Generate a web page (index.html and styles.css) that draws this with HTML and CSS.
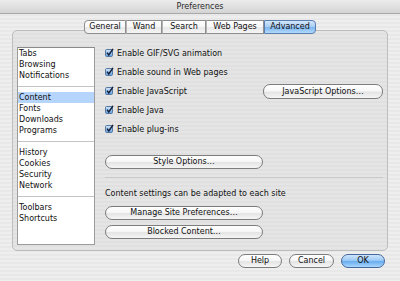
FILE: index.html
```html
<!DOCTYPE html>
<html>
<head>
<meta charset="utf-8">
<title>Preferences</title>
<link rel="stylesheet" href="styles.css">
</head>
<body>
<div class="window">
  <div class="titlebar">Preferences</div>
  <div class="tabs">
    <div class="tab t-general">General</div>
    <div class="tab t-wand">Wand</div>
    <div class="tab t-search">Search</div>
    <div class="tab t-web">Web Pages</div>
    <div class="tab t-adv active">Advanced</div>
  </div>
  <div class="group">
    <ul class="list">
      <li>Tabs</li>
      <li>Browsing</li>
      <li>Notifications</li>
      <li class="sep"></li>
      <li class="sel">Content</li>
      <li>Fonts</li>
      <li>Downloads</li>
      <li>Programs</li>
      <li class="sep"></li>
      <li>History</li>
      <li>Cookies</li>
      <li>Security</li>
      <li>Network</li>
      <li class="sep"></li>
      <li>Toolbars</li>
      <li>Shortcuts</li>
    </ul>
    <div class="content">
      <div class="rows">
        <div class="row"><span class="cb"><svg width="9" height="9" viewBox="0 0 9 9"><defs><linearGradient id="g1" x1="0" y1="0" x2="0" y2="1"><stop offset="0" stop-color="#d8e8fb"/><stop offset="1" stop-color="#5f9fe3"/></linearGradient></defs><rect x="0.5" y="1.5" width="7" height="7" rx="1.2" fill="url(#g1)" stroke="#56789f"/><path d="M2 4.6 L3.8 7 L8 0.8" fill="none" stroke="#14213a" stroke-width="1.5"/></svg></span>Enable GIF/SVG animation</div>
        <div class="row"><span class="cb"><svg width="9" height="9" viewBox="0 0 9 9"><rect x="0.5" y="1.5" width="7" height="7" rx="1.2" fill="url(#g1)" stroke="#56789f"/><path d="M2 4.6 L3.8 7 L8 0.8" fill="none" stroke="#14213a" stroke-width="1.5"/></svg></span>Enable sound in Web pages</div>
        <div class="row"><span class="cb"><svg width="9" height="9" viewBox="0 0 9 9"><rect x="0.5" y="1.5" width="7" height="7" rx="1.2" fill="url(#g1)" stroke="#56789f"/><path d="M2 4.6 L3.8 7 L8 0.8" fill="none" stroke="#14213a" stroke-width="1.5"/></svg></span>Enable JavaScript<button class="btn js">JavaScript Options…</button></div>
        <div class="row"><span class="cb"><svg width="9" height="9" viewBox="0 0 9 9"><rect x="0.5" y="1.5" width="7" height="7" rx="1.2" fill="url(#g1)" stroke="#56789f"/><path d="M2 4.6 L3.8 7 L8 0.8" fill="none" stroke="#14213a" stroke-width="1.5"/></svg></span>Enable Java</div>
        <div class="row"><span class="cb"><svg width="9" height="9" viewBox="0 0 9 9"><rect x="0.5" y="1.5" width="7" height="7" rx="1.2" fill="url(#g1)" stroke="#56789f"/><path d="M2 4.6 L3.8 7 L8 0.8" fill="none" stroke="#14213a" stroke-width="1.5"/></svg></span>Enable plug-ins</div>
      </div>
      <button class="btn wide style">Style Options…</button>
      <div class="rule"></div>
      <p class="note">Content settings can be adapted to each site</p>
      <button class="btn wide manage">Manage Site Preferences…</button>
      <button class="btn wide blocked">Blocked Content…</button>
    </div>
  </div>
  <div class="footer">
    <button class="btn b-help">Help</button>
    <button class="btn b-cancel">Cancel</button>
    <button class="btn b-ok">OK</button>
  </div>
</div>
</body>
</html>
```

FILE: styles.css
```css
html, body {
  margin: 0;
  padding: 0;
  width: 400px;
  height: 281px;
  overflow: hidden;
}
body {
  font-family: "DejaVu Sans", "Liberation Sans", sans-serif;
  font-size: 8px;
  color: #111;
  background: repeating-linear-gradient(#eeeeee 0 2px, #e8e8e8 2px 4px);
}
.titlebar {
  height: 13px;
  line-height: 14px;
  text-align: center;
  color: #2a2a2a;
  border-bottom: 1px solid #a9a9a9;
  background: linear-gradient(#ececec, #d4d4d4);
}
.tabs {
  display: flex;
  justify-content: center;
  margin-top: 6px;
  margin-bottom: -4px;
  position: relative;
  z-index: 1;
}
.tab {
  height: 12px;
  line-height: 12px;
  text-align: center;
  border: 1px solid #8e8e8e;
  border-left: 1px solid #b4b4b4;
  background: linear-gradient(#ffffff, #f6f6f6 50%, #e8e8e8 55%, #f5f5f5);
  color: #111;
}
.t-general { width: 40px; border-left-color: #8e8e8e; border-radius: 4px 0 0 4px; }
.t-wand { width: 34px; }
.t-search { width: 42px; }
.t-web { width: 56px; }
.t-adv { width: 50px; border-radius: 0 4px 4px 0; }
.tab.active {
  border-color: #5a7eb0;
  background: linear-gradient(#d2e6fb, #a7cdf5 50%, #7db6f0 55%, #b3dafd);
}
.group {
  box-sizing: border-box;
  height: 221px;
  margin: 0 12px;
  border: 1px solid #bdbdbd;
  border-radius: 5px;
  background: repeating-linear-gradient(#e5e5e5 0 2px, #e0e0e0 2px 4px);
  display: flex;
  gap: 10px;
  padding: 16px 4px 5px 4px;
}
.list {
  box-sizing: border-box;
  width: 78px;
  margin: 0;
  padding: 0;
  list-style: none;
  background: #fff;
  border: 1px solid #9c9c9c;
  border-top-color: #8a8a8a;
}
.list li {
  height: 11px;
  line-height: 11px;
  padding-left: 1px;
  white-space: nowrap;
}
.list li.sep {
  background: linear-gradient(transparent 5px, #c4c4c4 5px, #c4c4c4 6px, transparent 6px);
}
.list li.sel {
  background: #b5d5fd;
}
.content {
  flex: 1;
  display: flex;
  flex-direction: column;
  align-items: flex-start;
}
.rows {
  display: flex;
  flex-direction: column;
  gap: 7px;
  align-self: stretch;
}
.row {
  height: 12px;
  display: flex;
  align-items: center;
  white-space: nowrap;
}
.cb {
  width: 9px;
  height: 9px;
  margin-right: 3px;
  margin-top: -1px;
  display: block;
}
.cb svg { display: block; }
.btn {
  box-sizing: border-box;
  height: 14px;
  padding: 0;
  font: inherit;
  line-height: 12px;
  color: #111;
  text-align: center;
  border: 1px solid #7c7c7c;
  border-radius: 7px;
  background: linear-gradient(#ffffff, #f7f7f7 45%, #e4e4e4 55%, #f6f6f6);
  white-space: nowrap;
}
.btn.js {
  margin-left: auto;
  width: 120px;
  height: 15px;
  line-height: 13px;
  flex: none;
}
.btn.wide { width: 158px; }
.btn.style { margin-top: 20px; }
.rule {
  align-self: stretch;
  height: 1px;
  background: #cacaca;
  margin-top: 8px;
}
.note {
  margin: 10px 0 0;
  line-height: 12px;
  white-space: nowrap;
}
.btn.manage { margin-top: 6px; }
.btn.blocked { margin-top: 5px; }
.footer {
  display: flex;
  justify-content: flex-end;
  gap: 7px;
  padding-right: 15px;
  margin-top: 3px;
}
.b-help { width: 44px; }
.b-cancel { width: 45px; }
.b-ok {
  width: 44px;
  border-color: #44699e;
  background: linear-gradient(#cfe5fb, #9ccaf5 45%, #6aaeee 55%, #a9d6fd);
}
```
